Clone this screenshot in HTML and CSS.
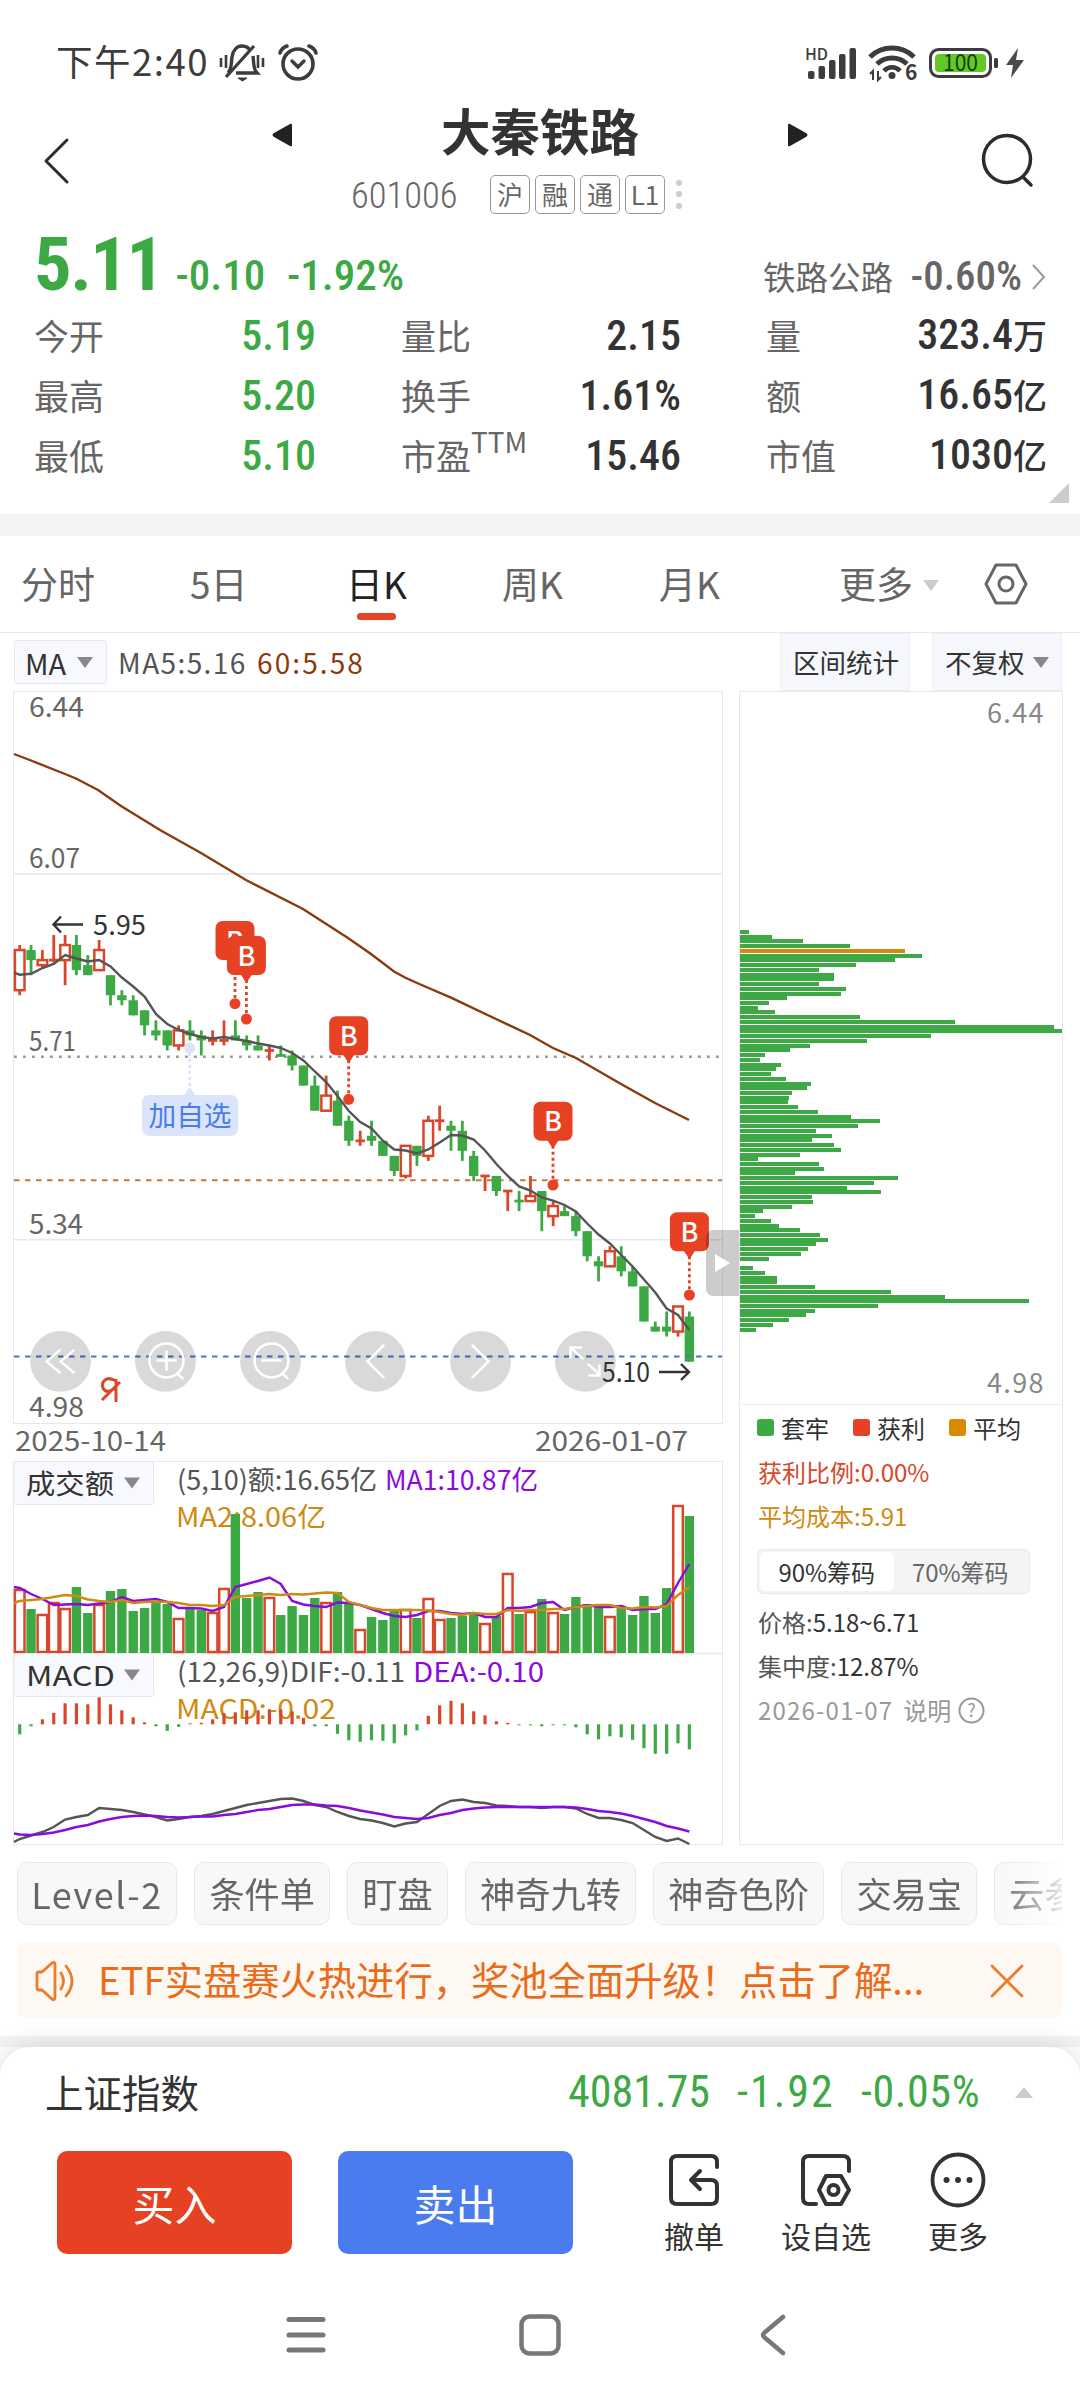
FILE: index.html
```html
<!DOCTYPE html>
<html lang="zh-CN">
<head>
    <meta charset="UTF-8">
    <meta name="viewport" content="width=device-width, initial-scale=1.0">
    <title>大秦铁路 601006</title>
    <link rel="stylesheet" href="styles.css">
</head>
<body>

    <div class="status">
        <span class="time">下午2:40</span>
        <svg class="bell" width="46" height="38" viewBox="0 0 46 38" fill="none" stroke="#3c3c3c" stroke-width="3.4">
            <path d="M9 29 C13 25 12 20 13 13 C14 6 18 2 23 2 C27 2 30 4 31 7 M34 12 C35 19 34 25 38 29 H17"/>
            <path d="M7 33 L35 2" stroke-width="3.2"/>
            <path d="M19 34 h9 l-4.500 3 z" fill="#3c3c3c" stroke-width="1"/>
            <path d="M2 14 v9 M7 11 v13 M39 11 v13 M44 14 v9" stroke-width="2.600"/>
        </svg>
        <svg width="40" height="38" viewBox="0 0 40 38" fill="none" stroke="#3c3c3c" stroke-width="3.600" stroke-linecap="round">
            <circle cx="20" cy="20" r="15"/>
            <path d="M2 9 C3 6 6 3 9 2 M38 9 C37 6 34 3 31 2"/>
            <path d="M14 17 L20 23 L26 17" stroke-width="3.400"/>
        </svg>
        <div class="status-right">
            <svg width="54" height="38" viewBox="0 0 54 38">
                <text class="hd" x="0" y="16" textLength="23">HD</text>
                <g fill="#3c3c3c">
                    <rect x="3" y="27" width="6.500" height="8" rx="2"/>
                    <rect x="13.500" y="22" width="6.500" height="13" rx="2"/>
                    <rect x="24" y="16" width="6.500" height="19" rx="2"/>
                    <rect x="34" y="10" width="6.500" height="25" rx="2"/>
                    <rect x="44.500" y="4" width="6.500" height="31" rx="2"/>
                </g>
            </svg>
            <svg class="wifi" width="50" height="38" viewBox="0 0 50 38" fill="none" stroke="#3c3c3c" stroke-width="5">
                <path d="M2 13 C14 1 34 1 46 13"/>
                <path d="M9 20 C17 12 31 12 39 20"/>
                <path d="M16 27 C20 22 28 22 32 27" stroke-width="4.500"/>
                <circle cx="24" cy="31.500" r="3.500" fill="#3c3c3c" stroke="none"/>
                <path d="M5 36 V27 l-3 3 M10 27 V36 l3 -3" stroke-width="2"/>
                <text class="six" x="37" y="36">6</text>
            </svg>
            <svg class="battery" width="70" height="34" viewBox="0 0 70 34">
                <rect x="1.500" y="3.500" width="60" height="27" rx="8" fill="#fff" stroke="#3c3c3c" stroke-width="3"/>
                <rect x="6" y="8" width="51" height="18" rx="4" fill="#62c823"/>
                <rect x="65" y="12" width="4" height="10" rx="1.500" fill="#3c3c3c"/>
                <text class="pct" x="14" y="25" textLength="35" lengthAdjust="spacingAndGlyphs">100</text>
            </svg>
            <svg width="20" height="30" viewBox="0 0 20 30"><path d="M13 0 L1 17 H8 L6 30 L19 12 H11 Z" fill="#4a4a4a"/></svg>
        </div>
    </div>

    <div class="header">
        <svg class="back" width="26" height="46" viewBox="0 0 26 46" fill="none" stroke="#2c2c2c" stroke-width="3" stroke-linecap="round" stroke-linejoin="round"><path d="M24 2 L3 23 L24 44"/></svg>
        <div class="stock">
            <div class="stock-name">
                <svg width="20" height="24" viewBox="0 0 20 24"><path d="M18 1 Q20 0 20 2 V22 Q20 24 18 23 L2 14 Q-1 12 2 10 Z" fill="#222"/></svg>
                <h1>大秦铁路</h1>
                <svg width="20" height="24" viewBox="0 0 20 24"><path d="M2 1 Q0 0 0 2 V22 Q0 24 2 23 L18 14 Q21 12 18 10 Z" fill="#222"/></svg>
            </div>
            <div class="stock-code">
                <span class="code din">601006</span>
                <span class="tag">沪</span>
                <span class="tag">融</span>
                <span class="tag">通</span>
                <span class="tag">L1</span>
                <span class="dots"><i></i><i></i><i></i></span>
            </div>
        </div>
        <svg class="search" width="54" height="56" viewBox="0 0 54 56" fill="none" stroke="#2c2c2c" stroke-width="3.500" stroke-linecap="round"><circle cx="26" cy="27" r="23.500"/><path d="M42 45 L50 53"/></svg>
    </div>

    <div class="quote">
        <div class="quote-top">
            <span class="price din">5.11</span>
            <span class="change din">-0.10</span>
            <span class="percent din">-1.92%</span>
            <span class="sector">铁路公路</span>
            <span class="sector-pct din">-0.60%</span>
            <svg width="14" height="26" viewBox="0 0 14 26" fill="none" stroke="#999" stroke-width="2"><path d="M1 1 L12 13 L1 25"/></svg>
        </div>
        <div class="quote-grid">
            <div><label>今开</label><b class="din green">5.19</b></div>
            <div><label>量比</label><b class="din">2.15</b></div>
            <div><label>量</label><b class="din">323.4<em>万</em></b></div>
            <div><label>最高</label><b class="din green">5.20</b></div>
            <div><label>换手</label><b class="din">1.61%</b></div>
            <div><label>额</label><b class="din">16.65<em>亿</em></b></div>
            <div><label>最低</label><b class="din green">5.10</b></div>
            <div><label>市盈<sup>TTM</sup></label><b class="din">15.46</b></div>
            <div><label>市值</label><b class="din">1030<em>亿</em></b></div>
        </div>
        <div class="corner"></div>
    </div>

    <div class="tabs">
        <span>分时</span>
        <span>5日</span>
        <span class="active">日K</span>
        <span>周K</span>
        <span>月K</span>
        <span>更多<i class="caret light"></i></span>
        <svg width="44" height="42" viewBox="0 0 44 42" fill="none" stroke="#666" stroke-width="3" stroke-linejoin="round"><path d="M12 2 H32 L42 21 L32 40 H12 L2 21 Z"/><circle cx="22" cy="21" r="7"/></svg>
    </div>

    <div class="indicator">
        <div class="ma-select">MA<i class="caret"></i></div>
        <span class="ma5">MA5:5.16</span>
        <span class="ma60">60:5.58</span>
        <div class="tool stat">区间统计</div>
        <div class="tool">不复权<i class="caret"></i></div>
    </div>

    <div class="charts">
        <svg id="kline" class="kline" width="712" height="1156" viewBox="12 690 712 1156"></svg>
        <div class="handle"><svg width="15" height="20" viewBox="0 0 15 20"><path d="M0 1 L15 10 L0 19 Z" fill="#fff"/></svg></div>
        <div class="chips">
            <div class="chips-chart">
                <span class="max">6.44</span>
                <div id="chip-bars" class="chip-bars"></div>
                <span class="min">4.98</span>
            </div>
            <div class="legend">
                <span><i class="sq green-bg"></i>套牢</span>
                <span><i class="sq red-bg"></i>获利</span>
                <span><i class="sq gold-bg"></i>平均</span>
            </div>
            <p class="red">获利比例:0.00%</p>
            <p class="gold">平均成本:5.91</p>
            <div class="segment">
                <span class="on">90%筹码</span>
                <span>70%筹码</span>
            </div>
            <p><label>价格:</label>5.18~6.71</p>
            <p><label>集中度:</label>12.87%</p>
            <p class="date"><span>2026-01-07</span> 说明
                <svg width="27" height="27" viewBox="0 0 27 27"><circle cx="13.500" cy="13.500" r="12" fill="none" stroke="#999" stroke-width="2"/><text x="13.500" y="20" text-anchor="middle">?</text></svg>
            </p>
        </div>
    </div>

    <div class="features">
        <span class="level">Level-2</span>
        <span>条件单</span>
        <span>盯盘</span>
        <span>神奇九转</span>
        <span>神奇色阶</span>
        <span>交易宝</span>
        <span>云参数</span>
    </div>

    <div class="notice">
        <svg width="40" height="40" viewBox="0 0 40 40" fill="none" stroke="#ee7a2a" stroke-width="2.800" stroke-linecap="round" stroke-linejoin="round"><path d="M2 13 Q2 11 4 11 H7 L17 2 Q20 0 20 4 V36 Q20 40 17 38 L7 29 H4 Q2 29 2 27 Z M26 12 Q31 20 26 28 M31 5 Q43 20 31 35"/></svg>
        <span class="notice-text">ETF实盘赛火热进行，奖池全面升级！点击了解...</span>
        <svg width="34" height="34" viewBox="0 0 34 34" stroke="#ee7a2a" stroke-width="2.800" stroke-linecap="round"><path d="M2 2 L32 32 M32 2 L2 32"/></svg>
    </div>

    <div class="gap"></div>

    <div class="sheet">
        <div class="index">
            <span class="index-name">上证指数</span>
            <span class="din v1">4081.75</span>
            <span class="din v2">-1.92</span>
            <span class="din v3">-0.05%</span>
            <i class="up"></i>
        </div>
        <div class="actions">
            <button class="buy">买入</button>
            <button class="sell">卖出</button>
            <div class="action">
                <svg width="56" height="58" viewBox="0 0 56 58" fill="none" stroke="#333" stroke-width="4" stroke-linecap="round" stroke-linejoin="round"><path d="M51 16 V11 Q51 5 45 5 H11 Q5 5 5 11 V47 Q5 53 11 53 H45 Q51 53 51 47 V35 Q51 29 45 29 H25 M34 20 L25 29 L34 38"/></svg>
                <span>撤单</span>
            </div>
            <div class="action wide">
                <svg width="56" height="58" viewBox="0 0 56 58" fill="none" stroke="#333" stroke-width="4" stroke-linecap="round" stroke-linejoin="round"><path d="M51 20 V11 Q51 5 45 5 H11 Q5 5 5 11 V47 Q5 53 11 53 H18"/><path d="M28 25 H43 L51 39 L43 53 H28 L21 39 Z"/><circle cx="35.500" cy="39" r="5"/></svg>
                <span>设自选</span>
            </div>
            <div class="action">
                <svg width="56" height="58" viewBox="0 0 56 58" fill="none" stroke="#333" stroke-width="3.800"><circle cx="28" cy="29" r="25.500"/><g fill="#333" stroke="none"><circle cx="16.500" cy="29" r="3"/><circle cx="28" cy="29" r="3"/><circle cx="39.500" cy="29" r="3"/></g></svg>
                <span>更多</span>
            </div>
        </div>
        <div class="navbar">
            <svg width="40" height="44" viewBox="0 0 40 44" stroke="#777" stroke-width="5" stroke-linecap="round"><path d="M3 6.500 H37 M3 22 H37 M3 37 H37"/></svg>
            <svg class="home" width="44" height="44" viewBox="0 0 44 44" fill="none" stroke="#777" stroke-width="4.500"><rect x="3.500" y="3.500" width="37" height="37" rx="8"/></svg>
            <svg width="30" height="44" viewBox="0 0 30 44" fill="none" stroke="#777" stroke-width="4.500" stroke-linecap="round" stroke-linejoin="round"><path d="M25 4 L6 20 Q4 22 6 24 L25 40"/></svg>
        </div>
    </div>

    <script src="script.js"></script>
</body>
</html>
```

FILE: styles.css
```css
body {
    margin: 0;
    width: 1080px;
    height: 2400px;
    overflow: hidden;
    background: #fff;
    color: #333;
    font-family: 'Noto Sans CJK SC', sans-serif;
    font-size: 24px;
}

svg {
    display: block;
    flex: none;
    overflow: visible;
}

i, em {
    font-style: normal;
}

h1, p {
    margin: 0;
}

.din {
    font-family: Roboto, 'Noto Sans CJK SC', sans-serif;
    font-stretch: 82%;
    white-space: nowrap;
}

.green { color: #3da945; }
.red { color: #d9472b; }
.gold { color: #cf8a12; }
.green-bg { background: #3da945; }
.red-bg { background: #e74124; }
.gold-bg { background: #d88a00; }

.caret {
    display: inline-block;
    border: 8px solid transparent;
    border-top: 11px solid #888;
    border-bottom: 0;
}

.caret.light {
    border-top-color: #ccc;
    margin-left: 10px;
    vertical-align: 8px;
}

/* status bar */

.status {
    box-sizing: border-box;
    height: 84px;
    padding: 42px 55px 0 56px;
    display: flex;
    align-items: center;
    color: #3c3c3c;
}

.time {
    width: 163px;
    margin-top: -5px;
    font-size: 36.500px;
    letter-spacing: 1.500px;
    line-height: 42px;
    white-space: nowrap;
}

.bell {
    margin-right: 13px;
}

.status-right {
    margin-left: auto;
    display: flex;
    align-items: center;
}

.hd {
    font-size: 16px;
    font-weight: 500;
    fill: #3c3c3c;
}

.six {
    font-size: 21px;
    font-weight: 700;
    fill: #3c3c3c;
    stroke: none;
}

.wifi { margin: 0 11px 0 9px; }
.battery { margin-right: 6px; }

.pct {
    font-size: 23px;
    fill: #1d3a0c;
}

/* title */

.header {
    height: 140px;
    display: flex;
}

.back {
    margin: 54px 0 0 43px;
}

.stock {
    width: 536px;
    margin-left: 203px;
    padding-top: 12px;
}

.stock-name {
    height: 68px;
    display: flex;
    justify-content: space-between;
    align-items: center;
}

.stock-name svg {
    margin-top: 10px;
}

h1 {
    font-size: 49.500px;
    font-weight: 700;
    line-height: 68px;
}

.stock-code {
    height: 60px;
    padding-left: 79px;
    display: flex;
    align-items: center;
    color: #666;
}

.code {
    width: 139px;
    margin-top: 2px;
    font-size: 36.500px;
    font-weight: 350;
}

.tag {
    box-sizing: border-box;
    width: 40px;
    height: 39px;
    margin-right: 5px;
    border: 1.500px solid #999;
    border-radius: 5px;
    font-size: 26px;
    line-height: 36px;
    text-align: center;
}

.dots {
    margin-left: 6px;
    display: grid;
    gap: 5.500px;
}

.dots i {
    width: 6px;
    height: 6px;
    border-radius: 50%;
    background: #ccc;
}

.search {
    margin: 48px 0 0 173px;
}

/* quote */

.quote {
    position: relative;
    box-sizing: border-box;
    height: 312px;
    padding: 4px 34px 0;
    border-bottom: 22px solid #f4f4f4;
}

.quote-top {
    height: 78px;
    display: flex;
    align-items: baseline;
    color: #3da945;
}

.price {
    width: 142px;
    font-size: 74.500px;
    font-weight: 700;
    font-stretch: 75%;
    letter-spacing: -1.500px;
    line-height: 74px;
}

.change, .percent, .sector-pct {
    font-size: 43px;
    font-weight: 500;
}

.change { width: 112px; }
.percent { width: 478px; }

.sector {
    width: 148px;
    font-size: 32.500px;
    color: #666;
}

.sector-pct {
    width: 122px;
    font-size: 41px;
    color: #666;
}

.quote-grid {
    width: 1012px;
    display: grid;
    grid-template-columns: 282px 280px 281px;
    column-gap: 85px;
}

.quote-grid div {
    height: 60px;
    display: flex;
    justify-content: space-between;
    align-items: center;
    line-height: 60px;
}

.quote-grid label {
    margin-top: -2px;
    font-size: 35px;
    color: #666;
}

.quote-grid sup {
    font-size: 28px;
    line-height: 0;
    vertical-align: 17px;
}

.quote-grid b {
    font-size: 42px;
    font-weight: 500;
    font-stretch: 80%;
}

.quote-grid em {
    font-size: 34px;
}

.corner {
    position: absolute;
    right: 11px;
    bottom: 11px;
    border-left: 20px solid transparent;
    border-bottom: 20px solid #ccc;
}

/* period tabs */

.tabs {
    height: 96px;
    padding-left: 21px;
    display: grid;
    grid-template-columns: 169px 156px 156px 157px 180px 145px 44px;
    align-items: center;
    border-bottom: 1px solid #e8e8e8;
    font-size: 37px;
    color: #666;
}

.tabs span {
    margin-top: -2px;
    white-space: nowrap;
    line-height: 96px;
}

.tabs .active {
    position: relative;
    color: #222;
}

.tabs .active::after {
    content: '';
    position: absolute;
    left: 11px;
    bottom: 11px;
    width: 39px;
    height: 7px;
    border-radius: 4px;
    background: #e74124;
}

.indicator {
    height: 58px;
    display: flex;
    align-items: center;
    font-size: 28px;
    line-height: 44px;
}

.ma-select {
    box-sizing: border-box;
    width: 93px;
    height: 44px;
    margin: 0 11px 0 14px;
    padding: 0 13px 0 10px;
    display: flex;
    align-items: center;
    justify-content: space-between;
    border: 1px solid #e6e8ee;
    border-radius: 3px;
    background: #f8f9fe;
    font-size: 29px;
}

.ma5 {
    width: 139px;
    letter-spacing: 1.400px;
    color: #555;
}

.ma60 {
    width: 523px;
    letter-spacing: 2.100px;
    color: #8a3a0e;
}

.tool {
    box-sizing: border-box;
    width: 130px;
    height: 58px;
    padding: 0 12px;
    display: flex;
    align-items: center;
    justify-content: space-between;
    border: 1px solid #ebedf3;
    background: #f5f7fd;
    font-size: 26.500px;
    white-space: nowrap;
}

.stat {
    margin-right: 22px;
}

/* charts */

.charts {
    position: relative;
    height: 1155px;
    padding-left: 12px;
    display: flex;
}

.kline {
    margin-top: -1px;
}

.kline text {
    font-size: 27px;
    fill: #555;
}

.kline .axis { fill: #666; }
.kline .dark { fill: #333; }
.kline .gold { fill: #cf8a12; }
.kline .purple { fill: #8a0bdc; }
.kline .flag { fill: #fff; font-weight: 500; }
.kline .watch { fill: #4a7ceb; }

.handle {
    position: absolute;
    left: 706px;
    top: 539px;
    width: 33px;
    height: 66px;
    display: flex;
    align-items: center;
    justify-content: center;
    border-radius: 7px 0 0 7px;
    background: rgba(0, 0, 0, 0.2);
}

.chips {
    box-sizing: border-box;
    width: 324px;
    height: 1154px;
    margin-left: 15px;
    border: 1px solid #e8e8e8;
}

.chips-chart {
    box-sizing: border-box;
    height: 713px;
    padding-right: 17px;
    border-bottom: 1px solid #eee;
    text-align: right;
    font-size: 27px;
    line-height: 39px;
    letter-spacing: 1.400px;
    color: #888;
}

.chips-chart span {
    display: block;
}

.chips-chart .max {
    height: 238px;
}

.chip-bars {
    height: 432px;
    margin-right: -17px;
}

.chip-bars i {
    display: block;
    height: 4px;
    margin-bottom: 0.740px;
    background: #3da945;
}

.chip-bars .avg {
    background: #d08a10;
}

.legend {
    height: 45px;
    padding-left: 17px;
    display: grid;
    grid-template-columns: 96px 96px 96px;
    align-items: center;
}

.legend span {
    display: flex;
    align-items: center;
    gap: 7px;
}

.sq {
    width: 17px;
    height: 17px;
    border-radius: 3px;
}

.chips p {
    padding-left: 18px;
    line-height: 44px;
    white-space: nowrap;
}

.chips p label {
    color: #555;
}

.segment {
    box-sizing: border-box;
    width: 273px;
    height: 45px;
    margin: 11px 0 6px 17px;
    padding: 2px;
    display: flex;
    border: 1px solid #e8e8e8;
    border-radius: 6px;
    background: #f4f4f4;
    line-height: 39px;
}

.segment span {
    width: 134px;
    text-align: center;
    color: #666;
}

.segment .on {
    background: #fff;
    border-radius: 5px;
    color: #333;
}

.chips .date {
    display: flex;
    align-items: center;
    gap: 10px;
    color: #999;
}

.date span {
    letter-spacing: 1.200px;
}

.date svg {
    margin-left: -3px;
}

.date text {
    font-size: 18px;
    fill: #999;
}

/* shortcuts */

.features {
    width: 1045px;
    height: 63px;
    margin: 16px 0 17px 17px;
    display: flex;
    gap: 17.400px;
    overflow: hidden;
    -webkit-mask-image: linear-gradient(90deg, #000 94%, transparent 101%);
    mask-image: linear-gradient(90deg, #000 94%, transparent 101%);
}

.features span {
    flex: none;
    box-sizing: border-box;
    height: 63px;
    padding: 0 14px;
    border: 1px solid #e8e8e8;
    border-radius: 10px;
    background: #f8f8f8;
    font-size: 35.200px;
    line-height: 60px;
    color: #666;
}

.features .level {
    width: 160px;
    padding: 0;
    text-align: center;
    font-size: 36px;
    letter-spacing: 1.600px;
}

.notice {
    box-sizing: border-box;
    width: 1045px;
    height: 77px;
    margin-left: 17px;
    padding: 0 20px 0 18px;
    display: flex;
    align-items: center;
    border-radius: 10px;
    background: #fef8f3;
    color: #ea6c1a;
    font-size: 38.300px;
}

.notice-text {
    width: 892px;
    margin: -4px 0 0 23px;
    white-space: nowrap;
}

.gap {
    height: 11px;
    margin-top: 17px;
    background: #f4f4f4;
}

/* bottom sheet */

.sheet {
    position: relative;
    height: 353px;
    border-radius: 30px 30px 0 0;
    background: #fff;
    box-shadow: 0 -2px 26px rgba(0, 0, 0, 0.13);
}

.index {
    height: 104px;
    padding: 0 0 14px 45px;
    box-sizing: border-box;
    display: flex;
    align-items: center;
    line-height: 88px;
    color: #3da945;
}

.index-name {
    width: 523px;
    margin-top: -3px;
    font-size: 38.500px;
    color: #333;
    line-height: 88px;
}

.index .din {
    font-size: 44px;
}

.v1 { width: 169px; }
.v2 { width: 124px; letter-spacing: 2px; }
.v3 { width: 154px; letter-spacing: 0.600px; }

.up {
    border: 9px solid transparent;
    border-top: 0;
    border-bottom: 11px solid #ccc;
}

.actions {
    padding-left: 57px;
    display: flex;
}

button {
    width: 235px;
    height: 103px;
    margin-right: 46px;
    border: none;
    border-radius: 10px;
    color: #fff;
    font-family: inherit;
    font-size: 42px;
    padding: 0;
}

.buy { background: #e74124; }
.sell { background: #4a7cf0; }

.action {
    width: 120px;
    margin-left: 15px;
    display: flex;
    flex-direction: column;
    align-items: center;
    font-size: 30px;
    line-height: 52px;
}

.action.wide {
    margin-left: 12px;
}

.action.wide + .action {
    margin-left: 12px;
}

.navbar {
    padding: 52px 292px 0 286px;
    display: flex;
    justify-content: space-between;
}

.home {
    margin-right: 5px;
}
```

FILE: script.js
```js
const GREEN = '#3da945';
const RED = '#d9472b';
const STEP = 11.35;
const X0 = 19.7;

// [up/down, high, body top, body bottom, low] in cents
const candles = [
    ['r', 593, 592, 584, 583], ['g', 593, 592, 590, 587], ['r', 592, 590, 589, 588.5], ['r', 595, 590, 590, 589.5], ['r', 595, 593, 590, 585],
    ['g', 595, 593, 588, 587], ['g', 591, 589, 587, 587], ['r', 594, 592, 588, 588], ['g', 587, 587, 583, 581], ['g', 584, 583, 582, 581],
    ['g', 583, 582, 579, 579], ['g', 580, 580, 577, 575], ['g', 578, 576, 575, 574], ['g', 576, 576, 573, 572], ['r', 577, 576, 573, 572],
    ['g', 578, 576, 575, 574], ['g', 576, 575, 574, 571], ['r', 576, 574, 574, 573], ['r', 578, 574, 574, 573], ['g', 578, 575, 574, 574],
    ['g', 575, 574, 573, 572], ['g', 575, 573, 572, 572], ['r', 573, 572, 572, 570], ['g', 573, 571, 571, 571], ['g', 572, 571, 569, 568],
    ['g', 569, 569, 565, 565], ['g', 567, 565, 560, 560], ['r', 567, 563, 560, 560], ['g', 564, 562, 557, 557], ['g', 559, 558, 554, 553],
    ['r', 556, 554, 554, 553], ['g', 558, 555, 554, 553], ['g', 554, 554, 551, 551], ['g', 551, 551, 548, 547], ['r', 553, 553, 547, 546.5],
    ['g', 553, 553, 551, 549], ['r', 559, 558, 551, 550], ['r', 561, 558, 558, 556], ['g', 558, 557, 556, 552], ['g', 558, 556, 552, 550],
    ['g', 552, 551, 547, 546], ['r', 547, 547, 547, 544], ['g', 547, 547, 544, 543], ['r', 544, 544, 544, 540], ['g', 544, 542, 542, 540],
    ['r', 547, 543, 542, 542], ['g', 544, 544, 540, 536], ['r', 542, 541, 539, 537], ['g', 541, 540, 539, 539], ['g', 540, 539, 536, 535],
    ['g', 536, 536, 531, 530], ['g', 531, 530, 529, 526], ['r', 533, 532, 529, 529], ['g', 533, 531, 528, 527], ['g', 529, 528, 525, 525],
    ['g', 525, 525, 518, 518], ['g', 518, 517, 516, 516], ['g', 520, 517, 516, 515], ['r', 521, 521, 516, 515], ['g', 520, 519, 510, 510]
];

const ma5 = [974.7, 973.7, 968, 964, 955, 958.5, 961.5, 960, 966.5, 977.5, 986.5, 996.5, 1014, 1024, 1030, 1034, 1037, 1038.5, 1037, 1039, 1041, 1043.5, 1045.5, 1048, 1053, 1060.5, 1071.5, 1082, 1096, 1111, 1122, 1128.5, 1140.7, 1149.5, 1150.5, 1153.5, 1149.5, 1142.5, 1135, 1135.5, 1139.5, 1150.5, 1164, 1176, 1186.5, 1190.5, 1197.5, 1200.7, 1205, 1211.5, 1223.5, 1234.5, 1243.5, 1255, 1266.5, 1279.5, 1292.5, 1308.5, 1315, 1330];
const volume = [64, 44, 39, 51, 45, 66, 40, 49, 62, 64, 42, 45, 51, 49, 35, 45, 43, 41, 65, 139, 55, 61, 56, 38, 47, 38, 55, 51, 61, 49, 24, 36, 33, 44, 44, 35, 55, 34, 35, 37, 39, 30, 37, 80, 39, 42, 54, 41, 39, 56, 49, 46, 37, 45, 38, 57, 40, 65, 148, 137];
const vma1 = [65, 59, 54, 48, 48.5, 49, 48, 49.5, 51, 56, 52, 53, 54, 51, 45, 45, 44.5, 42, 46, 66, 69, 72, 75.5, 69, 52, 48.5, 47, 46, 50.5, 50, 48, 44, 40, 37, 36, 38, 42, 42, 40, 39, 40, 36, 36, 45, 45, 46, 50, 51, 43, 46, 48, 46, 46, 47, 43, 44, 44, 49, 70, 89];
const vma2 = [52, 53, 54, 56, 58, 57, 53.5, 52, 51, 53, 50, 51, 51.5, 51, 50, 48, 48, 47, 48, 56, 57, 58, 59, 58, 59, 58.5, 59.5, 60.5, 60, 51, 48, 45, 43, 43, 43, 43, 42.5, 41, 39, 38, 40, 39, 39, 43, 42, 43, 43, 44, 44, 46, 47, 48, 48, 45, 44.5, 46, 45.5, 47, 58, 66];
const macd = [-10, -2, 5, 11.5, 21, 21, 20, 27, 20, 14, 7, 2, -2, -6.5, -2.5, 1, 1.5, 5, 11, 12, 14, 14, 15, 15, 13, 6.5, -2, -2, -9.5, -16, -17.5, -16, -16.5, -19, -11, -6, 8.5, 19, 23.5, 21, 13, 9, 3, 1.5, -1, -1, -2, -1, -1, -3, -10, -15, -12, -13, -15.5, -24, -29.5, -29.5, -19, -25];
const dif = [1839, 1835.5, 1832, 1827, 1819.5, 1817, 1815, 1808, 1809, 1810, 1812, 1814.5, 1817, 1820.5, 1819, 1817, 1816, 1814, 1811, 1808, 1805, 1803, 1801, 1799, 1798.5, 1801, 1805, 1807, 1812, 1816, 1819, 1820.5, 1823, 1826.5, 1823.5, 1822, 1814, 1806, 1801, 1799.5, 1802, 1803, 1805.5, 1806, 1807, 1807, 1808, 1807, 1807, 1808.5, 1814, 1818, 1818, 1820, 1823, 1830, 1837, 1841, 1838.5, 1844];
const dea = [1834.5, 1835, 1834, 1832.5, 1830, 1827, 1825, 1821.5, 1819, 1817, 1816, 1815.5, 1816, 1817, 1817.5, 1817, 1816.5, 1816.5, 1815, 1814, 1812, 1810, 1809, 1807, 1805, 1804.5, 1804.5, 1805.5, 1806, 1808, 1810.5, 1812.5, 1814.5, 1817, 1818, 1819, 1818, 1815, 1813, 1810, 1808.5, 1807.5, 1807, 1807, 1807, 1807, 1807, 1807, 1807, 1807.5, 1809, 1811, 1812, 1813.5, 1816, 1819, 1822, 1826, 1828.5, 1831.5];

const px = i => X0 + i * STEP;
const py = c => 935 + (595 - c) * 5.02;

function line(y1) {
    return `<path d="M14 ${y1} H722" fill="none" stroke="#e8e8e8" stroke-width="1.5"/>`;
}

function poly(list, color, start) {
    const pts = list.map((y, i) => `${px(i)},${y}`).join(' ');
    return `<polyline points="14,${start} ${pts}" fill="none" stroke="${color}" stroke-width="2.4"/>`;
}

function text(x, y, str, w, cls) {
    return `<text x="${x}" y="${y}" textLength="${w}" lengthAdjust="spacingAndGlyphs" class="${cls || ''}">${str}</text>`;
}

function box(i, top, bottom, color) {
    const x = px(i);
    if (color === 'g') {
        return `<rect x="${x - 4.7}" y="${top}" width="9.4" height="${bottom - top}" fill="${GREEN}"/>`;
    }
    return `<rect x="${x - 4.8}" y="${top}" width="9.6" height="${bottom - top}" fill="#fff" stroke="${RED}" stroke-width="2.5"/>`;
}

function drawCandles() {
    return candles.map(([c, high, top, bottom, low], i) => {
        const x = px(i);
        const color = c === 'g' ? GREEN : RED;
        let s = `<path d="M${x} ${py(high)} V${py(low)}" stroke="${color}" stroke-width="2.8"/>`;
        if (top === bottom) {
            s += `<path d="M${x - 4.7} ${py(top)} h9.4" stroke="${color}" stroke-width="2.8"/>`;
        } else {
            s += box(i, py(top), py(bottom), c);
        }
        return s;
    }).join('');
}

function flag(x, top, dot) {
    return `<path d="M${x} ${top + 44} V${dot}" stroke="#e74124" stroke-width="2.8" stroke-dasharray="3 3"/>
        <circle cx="${x}" cy="${dot}" r="5.5" fill="#e74124"/>
        <path d="M${x - 6} ${top + 38} h12 l-6 9 z" fill="#e74124"/>
        <rect x="${x - 19.5}" y="${top}" width="39" height="39" rx="7" fill="#e74124"/>
        <text x="${x}" y="${top + 29.5}" text-anchor="middle" class="flag">B</text>`;
}

function select(y, str, w) {
    return `<rect x="14" y="${y}" width="139.500" height="43" rx="2" fill="#f8f9fe" stroke="#e6e8ee"/>
        ${text(26, y + 32, str, w, 'dark')}
        <path d="M124 ${y + 16} h16 l-8 11 z" fill="#888"/>`;
}

function roundButton(x, icon) {
    return `<g transform="translate(${x} 1361.4)"><circle r="30.4" fill="#000" fill-opacity=".15"/>
        <path d="${icon}" fill="none" stroke="#fff" stroke-width="2.5" stroke-linecap="round"/></g>`;
}

const ma60 = '14,754 31,760.5 65,774 76,778.5 98,790 121,806 160,830 201,853 246,880 303,909 348,938 371,954 394,971.5 405,977.5 417,983 451,997.7 496,1019 530,1035 553,1048 576,1058 621,1084 655,1103 689,1120';
const glass = 'M18 -1 A17 17 0 1 1 -16 -1 A17 17 0 1 1 18 -1 M12 12 L17 17';

let svg = '';
svg += '<rect x="13.5" y="691.5" width="709" height="732" fill="none" stroke="#e8e8e8"/>';
svg += '<path d="M13.5 1844.5 V1461.5 H722.5 V1844.5 Z" fill="none" stroke="#e8e8e8"/>';
svg += line(873.7) + line(1239.7) + line(1653.5);
svg += '<path d="M14 1056.7 H722" stroke="#999" stroke-width="2.500" stroke-dasharray="2.800 6.200"/>';
svg += text(29, 716.5, '6.44', 55, 'axis') + text(29, 868, '6.07', 51, 'axis') + text(29, 1051, '5.71', 47, 'axis') + text(29, 1234, '5.34', 54, 'axis') + text(29, 1417, '4.98', 55, 'axis');
svg += '<path d="M14 1180.3 H722" stroke="#d0752e" stroke-width="2" stroke-dasharray="5.500 5.500"/>';
svg += drawCandles();
svg += `<polyline points="${ma60}" fill="none" stroke="#8a3a0e" stroke-width="2.4"/>`;
svg += poly(ma5, '#555', 972.7);
svg += '<path d="M14 1356.6 H722" stroke="#4a74d0" stroke-width="2" stroke-dasharray="5.500 5.500"/>';

svg += '<path d="M83 924.500 H54 M61 916.500 L53.500 924.500 L61 932.500" fill="none" stroke="#333" stroke-width="2.400"/>' + text(93, 934.5, '5.95', 53, 'dark');

// watchlist mark
svg += `<path d="M189.700 1053 V1088" stroke="#dae4fb" stroke-width="2.800" stroke-dasharray="3 3"/>
    <circle cx="189.700" cy="1048" r="5.500" fill="#dae4fb"/>
    <path d="M183.700 1096 h12 l-6 -9 z" fill="#dae4fb"/>
    <rect x="142" y="1095" width="96" height="41" rx="7" fill="#dae4fb"/>`;
svg += text(148.5, 1125.5, '加自选', 83, 'watch');

svg += flag(235, 921, 1003.7) + flag(246.4, 936, 1019) + flag(348.7, 1016.3, 1099.3) + flag(553, 1101.7, 1185) + flag(689.4, 1212.3, 1295);

svg += roundButton(60.6, 'M-1 -11 L-14 0 L-1 11 M13 -11 L0 0 L13 11');
svg += roundButton(165.5, glass + ' M-8 -1 H10 M1 -10 V8');
svg += roundButton(270.5, glass + ' M-8 -1 H10');
svg += roundButton(375.5, 'M8 -16 L-8 0 L8 16');
svg += roundButton(480.5, 'M-8 -16 L8 0 L-8 16');
svg += roundButton(585.4, 'M-3 -3 L-15 -14 M-4 -14 H-15 V-4 M3 3 L14 13 M4 14 H14 V4');
svg += text(602, 1382, '5.10', 48, 'dark') + '<path d="M659 1372 H689 M681 1364 L689 1372 L681 1380" fill="none" stroke="#333" stroke-width="2.400"/>';
svg += '<path d="M102 1400 L120 1382 M116 1379 V1402 M116 1381 C106 1375 101 1382 103 1388 C106 1394 113 1391 116 1386" fill="none" stroke="#d9472b" stroke-width="3"/>';

svg += text(15, 1451, '2025-10-14', 151, 'axis') + text(535, 1451, '2026-01-07', 153, 'axis');

svg += select(1461.5, '成交额', 88);
svg += text(177, 1489.5, '(5,10)额:16.65亿', 200) + text(385, 1489.5, 'MA1:10.87亿', 153, 'purple') + text(176, 1527, 'MA2:8.06亿', 150, 'gold');
svg += volume.map((h, i) => box(i, candles[i][0] === 'r' ? 1654 - h : 1653 - h, candles[i][0] === 'r' ? 1652 : 1653, candles[i][0])).join('');
svg += poly(vma1.map(v => 1653 - v), '#8a0bdc', 1587) + poly(vma2.map(v => 1653 - v), '#cf8a12', 1603);

svg += select(1653.5, 'MACD', 89);
svg += text(177, 1681.5, '(12,26,9)DIF:-0.11', 228) + text(413, 1681.5, 'DEA:-0.10', 131, 'purple') + text(176, 1718.5, 'MACD:-0.02', 160, 'gold');
svg += macd.map((v, i) => `<rect x="${px(i) - 1.6}" y="${v > 0 ? 1724.3 - v : 1724.3}" width="3.2" height="${Math.abs(v)}" fill="${v > 0 ? RED : GREEN}"/>`).join('');
svg += poly(dif, '#555', 1842) + poly(dea, '#8a0bdc', 1833.5);

document.getElementById('kline').innerHTML = svg;

const chips = [9, 32, 63, 110, 165, 182, 155, 116, 79, 94, 94, 79, 106, 101, 47, 29, 18, 35, 120, 215, 314, 322, 191, 127, 70, 50, 25, 20, 41, 36, 31, 46, 71, 67, 52, 49, 48, 58, 78, 111, 140, 118, 76, 92, 72, 94, 101, 60, 18, 79, 84, 55, 158, 134, 107, 141, 72, 73, 52, 23, 15, 31, 39, 60, 80, 88, 76, 68, 61, 29, 0, 13, 25, 37, 37, 75, 151, 205, 289, 138, 75, 66, 49, 33, 16];
document.getElementById('chip-bars').innerHTML = chips
    .map((w, i) => `<i${i === 4 ? ' class="avg"' : ''} style="width: ${w}px"></i>`)
    .join('');
```
